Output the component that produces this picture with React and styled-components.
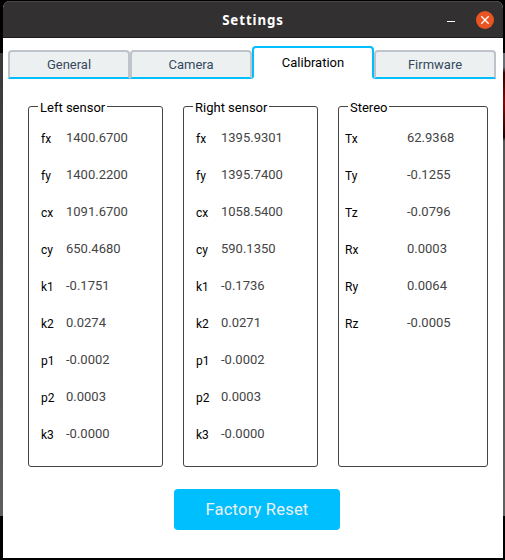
import React from "react";
import styled, { createGlobalStyle, css } from "styled-components";

const GlobalStyle = createGlobalStyle`
  * { box-sizing: border-box; }
  body { margin: 0; font-family: Roboto, sans-serif; }
`;

const Desktop = styled.div`
  display: flex;
  width: 505px;
  height: 560px;
  padding: 1px 2px 2px 3px;
  background:
    linear-gradient(#6b6b73 0 14px, #300000 20px, #7a0d04 50px, #200000 84px, #555 88px, #606060) right 53px / 2px 463px no-repeat,
    linear-gradient(#3b383a, #484848 40%, #5e5e5e) left 53px / 3px 463px no-repeat,
    #000;
`;

const Window = styled.main`
  display: flex;
  flex-direction: column;
  width: 500px;
  height: 557px;
  border-radius: 7px 7px 0 0;
  background: #fff;
  overflow: hidden;
`;

const TitleBar = styled.header`
  display: grid;
  grid-template-columns: 1fr auto 1fr;
  align-items: center;
  height: 37px;
  flex: none;
  background: #333031;
  border-top: 1px solid #474445;
  border-bottom: 1px solid #1d1b1c;
`;

const Title = styled.h1`
  grid-column: 2;
  margin: 1px 0 0;
  font: 700 13.3px/18px "Noto Sans", sans-serif;
  letter-spacing: 0.9px;
  color: #fff;
`;

const Controls = styled.div`
  display: flex;
  align-items: center;
  justify-content: flex-end;
  gap: 21px;
  padding-right: 9px;
`;

const Control = styled.button`
  display: block;
  padding: 0;
  border: 0;
  background: none;
  svg { display: block; }
`;

const Tabs = styled.nav`
  display: flex;
  align-items: flex-end;
  flex: none;
  height: 41px;
  padding-left: 5px;
`;

const Tab = styled.button`
  width: 122px;
  height: 29px;
  padding: 1px 0 0;
  border: 2px solid #bfc3ca;
  border-bottom-color: #00bfff;
  border-radius: 4px 4px 0 0;
  background: #ecf0f1;
  color: #34495e;
  font: 13px/22px Roboto, sans-serif;
  ${(p) => p.$active && css`
    height: 33px;
    padding: 0;
    border-color: #00bfff;
    border-bottom-color: #fff;
    background: #fff;
    color: #000;
  `}
`;

const Panels = styled.section`
  display: grid;
  grid-template-columns: 135px 135px 150px;
  gap: 20px;
  flex: none;
  padding: 19px 15px 0 25px;
`;

const Panel = styled.fieldset`
  min-width: 0;
  height: 369px;
  margin: 0;
  padding: 0 0 0 ${(p) => p.$inset}px;
  border: 1px solid #444;
  border-radius: 3px;
`;

const Legend = styled.legend`
  height: 17px;
  margin-left: ${(p) => 9 - p.$inset}px;
  padding: 0 2px;
  font-size: 13px;
  line-height: 20px;
  color: #000;
`;

const Values = styled.dl`
  margin: 12px 0 0;
`;

const Row = styled.div`
  display: grid;
  grid-template-columns: ${(p) => p.$labelWidth}px 1fr;
  height: 37px;
`;

const Name = styled.dt`
  padding-top: 3px;
  font-size: 12px;
  line-height: 18px;
  color: #000;
`;

const Value = styled.dd`
  margin: 0;
  padding-top: 2px;
  font-size: 13px;
  line-height: 18px;
  color: #444;
`;

const Footer = styled.footer`
  display: flex;
  padding: 22px 0 0 171px;
`;

const ResetButton = styled.button`
  width: 166px;
  height: 41px;
  padding: 0;
  border: 0;
  border-radius: 4px;
  background: #00bfff;
  color: #ecf0f1;
  font: 16.5px/20px Roboto, sans-serif;
  letter-spacing: 0.2px;
`;

const tabs = ["General", "Camera", "Calibration", "Firmware"];

const panels = [
  {
    title: "Left sensor", inset: 12, labelWidth: 25,
    values: [["fx", "1400.6700"], ["fy", "1400.2200"], ["cx", "1091.6700"], ["cy", "650.4680"], ["k1", "-0.1751"], ["k2", "0.0274"], ["p1", "-0.0002"], ["p2", "0.0003"], ["k3", "-0.0000"]],
  },
  {
    title: "Right sensor", inset: 12, labelWidth: 25,
    values: [["fx", "1395.9301"], ["fy", "1395.7400"], ["cx", "1058.5400"], ["cy", "590.1350"], ["k1", "-0.1736"], ["k2", "0.0271"], ["p1", "-0.0002"], ["p2", "0.0003"], ["k3", "-0.0000"]],
  },
  {
    title: "Stereo", inset: 6, labelWidth: 62,
    values: [["Tx", "62.9368"], ["Ty", "-0.1255"], ["Tz", "-0.0796"], ["Rx", "0.0003"], ["Ry", "0.0064"], ["Rz", "-0.0005"]],
  },
];

export default function App() {
  return (
    <>
      <GlobalStyle />
      <Desktop>
        <Window>
          <TitleBar>
            <Title>Settings</Title>
            <Controls>
              <Control aria-label="Minimize">
                <svg width="8" height="18"><path d="M0 10.5h8" stroke="#fff" /></svg>
              </Control>
              <Control aria-label="Close">
                <svg width="18" height="18" viewBox="0 0 18 18">
                  <circle cx="9" cy="9" r="9" fill="#e95420" />
                  <path d="M5.3 5.3l7.4 7.4M12.7 5.3l-7.4 7.4" stroke="#fff" strokeWidth="1.3" />
                </svg>
              </Control>
            </Controls>
          </TitleBar>
          <Tabs>
            {tabs.map((t) => <Tab key={t} $active={t === "Calibration"}>{t}</Tab>)}
          </Tabs>
          <Panels>
            {panels.map((p) => (
              <Panel key={p.title} $inset={p.inset}>
                <Legend $inset={p.inset}>{p.title}</Legend>
                <Values>
                  {p.values.map(([name, value]) => (
                    <Row key={name} $labelWidth={p.labelWidth}>
                      <Name>{name}</Name>
                      <Value>{value}</Value>
                    </Row>
                  ))}
                </Values>
              </Panel>
            ))}
          </Panels>
          <Footer><ResetButton>Factory Reset</ResetButton></Footer>
        </Window>
      </Desktop>
    </>
  );
}
